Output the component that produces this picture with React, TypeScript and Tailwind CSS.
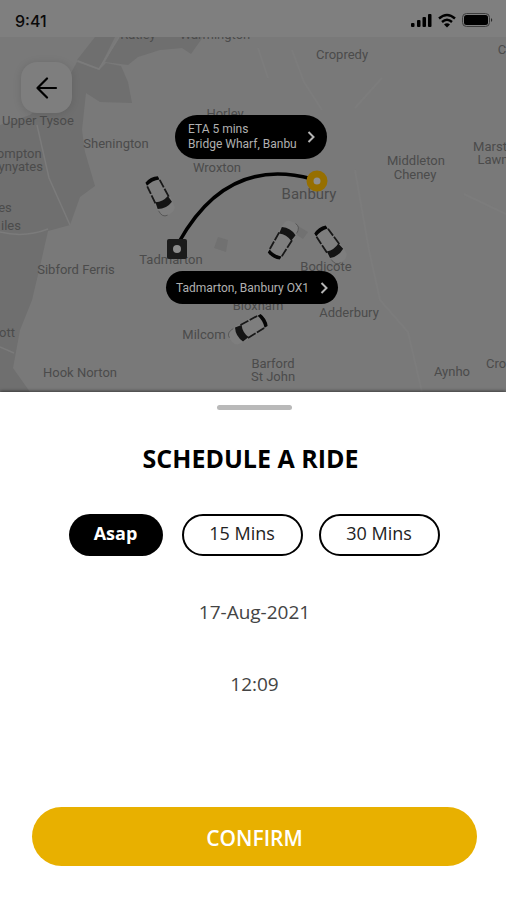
import { useState } from 'react'

const labels = [
  { x: 342, y: 59, text: 'Cropredy' },
  { x: 215, y: 39, text: 'Warmington' },
  { x: 138, y: 39, text: 'Ratley' },
  { x: 502, y: 54, text: 'C' },
  { x: 38, y: 125, text: 'Upper Tysoe' },
  { x: 116, y: 148, text: 'Shenington' },
  { x: 225, y: 118, text: 'Horley' },
  { x: 217, y: 172, text: 'Wroxton' },
  { x: 15, y: 158, text: 'Compton' },
  { x: 15, y: 171, text: 'Wynyates' },
  { x: 5, y: 212, text: 'es' },
  { x: 11, y: 230, text: 'iles' },
  { x: 416, y: 165, text: 'Middleton' },
  { x: 415, y: 179, text: 'Cheney' },
  { x: 490, y: 151, text: 'Marst' },
  { x: 493, y: 164, text: 'Lawn' },
  { x: 171, y: 264, text: 'Tadmarton' },
  { x: 76, y: 274, text: 'Sibford Ferris' },
  { x: 326, y: 271, text: 'Bodicote' },
  { x: 258, y: 310, text: 'Bloxham' },
  { x: 349, y: 317, text: 'Adderbury' },
  { x: 204, y: 339, text: 'Milcom' },
  { x: 7, y: 337, text: 'ott' },
  { x: 80, y: 377, text: 'Hook Norton' },
  { x: 273, y: 368, text: 'Barford' },
  { x: 273, y: 381, text: 'St John' },
  { x: 452, y: 376, text: 'Aynho' },
  { x: 496, y: 368, text: 'Cro' },
]

const cars = [
  { x: 158, y: 192, angle: 153 },
  { x: 281, y: 244, angle: 31 },
  { x: 328, y: 241, angle: 145 },
  { x: 252, y: 327, angle: 240 },
]

const slots = ['Asap', '15 Mins', '30 Mins']

// Drawn pointing up around its own centre, then turned to its heading.
function Car({ x, y, angle }: { x: number; y: number; angle: number }) {
  return (
    <g transform={`translate(${x} ${y}) rotate(${angle})`}>
      <path d="M-9 -13 L-8 -21 Q-6 -25 0 -25 Q6 -25 8 -21 L9 -13 L8 13 Q7 16 0 16 Q-7 16 -8 13Z" fill="#7e7e7e" />
      <path d="M2 -25 Q8 -25 8 -17" fill="none" stroke="#525252" strokeWidth="0.8" />
      <path d="M-8 -15 Q0 -19 8 -15 L7 -8 Q0 -11 -7 -8Z" fill="#141414" />
      <path d="M-7 10.5 Q0 13 7 10.5 L7 14 Q0 17 -7 14Z" fill="#050505" />
      <path d="M-7.5 -9 L-7 10 M7.5 -9 L7 10" stroke="#181818" strokeWidth="1.8" strokeDasharray="9 1.5" />
    </g>
  )
}

function MapCanvas() {
  return (
    <svg viewBox="0 37 506 355" preserveAspectRatio="xMidYMid slice" className="block h-full w-full" aria-hidden="true">
      <rect x="0" y="37" width="506" height="355" fill="#797979" />
      <g fill="#6f6f6f">
        <path d="M95 37 L115 37 L99 69 L77 60Z" />
        <path d="M119 37 L203 37 L191 54 L182 48 L160 50 L138 57 L128 65 L105 62Z" />
        <path d="M77 62 L99 70 L106 63 L121 66 L128 82 L132 103 L100 102 L86 93 L82 130 L85 152 L95 186 L80 197 L70 225 L48 231 L41 262 L32 300 L20 330 L13 368 L30 392 L0 392 L0 125 L30 115 L66 82Z" />
      </g>
      <g fill="none" stroke="#7b7b7b" strokeWidth="1.5">
        <path d="M119 37 L99 69 L78 61" />
        <path d="M37 125 L49 178 L70 225" />
        <path d="M0 232 Q25 238 48 229" />
        <path d="M0 347 L14 353" />
      </g>
      <g fill="none" stroke="#7c7c7c" strokeWidth="2">
        <path d="M258 48 L268 78 M292 50 L304 82 L322 110" />
        <path d="M355 108 L382 78" />
        <path d="M355 170 L369 250 L380 300 L408 332 L422 392" />
        <path d="M464 194 L506 214" />
      </g>
      <path d="M218 237 L228 240 L226 252 L214 248Z" fill="#717171" />
      <path d="M298 226 L308 232 L303 239 L297 235Z" fill="#717171" />
      <g fill="#4b4b4b" fontFamily="Roboto, sans-serif" fontSize="13" textAnchor="middle">
        {labels.map((l) => (
          <text key={l.text} x={l.x} y={l.y}>{l.text}</text>
        ))}
        <text x="309" y="199" fontSize="15">Banbury</text>
      </g>
      {cars.map((c) => (
        <Car key={c.x} {...c} />
      ))}
      <path d="M179 242 C208 190 250 162 312 179" fill="none" stroke="#000" strokeWidth="3.5" />
      <circle cx="317" cy="181" r="7" fill="#8f8f8f" stroke="#966f00" strokeWidth="7" />
      <rect x="167" y="239" width="20" height="20" rx="2" fill="#1b1b1b" />
      <circle cx="177" cy="249" r="4" fill="#8b8b8b" />
    </svg>
  )
}

function StatusBar() {
  return (
    <div className="flex h-[37px] items-center justify-between bg-[#7f7f7f] pt-1 pr-3 pl-[15px]">
      <span className="font-['Inter',sans-serif] text-base font-medium text-[#0a0a0a]">9:41</span>
      <svg width="84" height="18" viewBox="0 0 84 18" fill="#000" aria-hidden="true">
        <rect x="1" y="11" width="3.5" height="4" rx="1" />
        <rect x="7" y="8" width="3.5" height="7" rx="1" />
        <rect x="12.5" y="5" width="3.5" height="10" rx="1" />
        <rect x="18" y="2" width="3.5" height="13" rx="1" />
        <g fill="none" stroke="#000" strokeWidth="2.4">
          <path d="M29 6.5 Q37 -0.5 45 6.5" />
          <path d="M32 10 Q37 5.5 42 10" />
        </g>
        <path d="M34 12.5 Q37 10 40 12.5 L37 15.5Z" />
        <rect x="52.5" y="1.5" width="27" height="13" rx="4" fill="none" stroke="#3d3d3d" />
        <rect x="54" y="3" width="24" height="10" rx="2.5" />
        <path d="M81 6 Q83.5 8 81 10Z" fill="#2a2a2a" />
      </svg>
    </div>
  )
}

function Chevron() {
  return (
    <svg width="8" height="12" viewBox="0 0 8 12" fill="none" stroke="#b5b5b5" strokeWidth="2" className="shrink-0" aria-hidden="true">
      <path d="M1.5 1 L6.5 6 L1.5 11" />
    </svg>
  )
}

export default function App() {
  const [slot, setSlot] = useState('Asap')

  return (
    <main className="flex min-h-screen flex-col bg-white font-['Open_Sans',sans-serif] text-black">
      <StatusBar />
      <section className="relative h-[355px] overflow-hidden">
        <MapCanvas />
        <button
          type="button"
          aria-label="Back"
          className="absolute top-[25px] left-[21px] flex size-[51px] items-center justify-center rounded-2xl bg-[#7e7e7e] shadow-[0_1px_8px_rgba(0,0,0,0.12)]"
        >
          <svg width="22" height="22" viewBox="0 0 22 22" fill="none" stroke="#000" strokeWidth="2.2" strokeLinecap="round" strokeLinejoin="round" aria-hidden="true">
            <path d="M20 11 H1.5 M11 1.5 L1.5 11 L11 20.5" />
          </svg>
        </button>
        <button
          type="button"
          className="absolute top-[78px] left-[175px] flex h-11 w-[152px] items-center justify-between rounded-full bg-black pr-3 pl-[13px] text-left font-['Roboto',sans-serif] text-xs leading-[15px] text-[#b0b0b0]"
        >
          <span className="whitespace-nowrap">
            ETA 5 mins
            <br />
            Bridge Wharf, Banbu
          </span>
          <Chevron />
        </button>
        <button
          type="button"
          className="absolute top-[234px] left-[166px] flex h-[33px] w-[172px] items-center justify-between rounded-full bg-black px-[10px] font-['Roboto',sans-serif] text-xs text-[#b0b0b0]"
        >
          <span className="whitespace-nowrap">Tadmarton, Banbury OX1</span>
          <Chevron />
        </button>
      </section>

      <section className="relative flex flex-1 flex-col items-center bg-white pt-[13px] pr-[29px] pb-[34px] pl-8 shadow-[0_-1px_3px_rgba(0,0,0,0.5)]">
        <div className="h-[5px] w-[75px] rounded-full bg-[#b9b9b9]" />
        <h1 className="mt-8 pr-2 text-[25px] leading-8 font-bold">SCHEDULE A RIDE</h1>
        <div className="mt-10 flex pr-px">
          {slots.map((s) => (
            <button
              key={s}
              type="button"
              aria-pressed={slot === s}
              onClick={() => setSlot(s)}
              className={
                slot === s
                  ? 'mr-[19px] h-[42px] w-[94px] rounded-full bg-black pb-1 text-lg font-bold text-white'
                  : 'mr-4 h-[42px] w-[121px] rounded-full border-2 border-black pb-1 text-lg text-[#222] last:mr-0'
              }
            >
              {s}
            </button>
          ))}
        </div>
        <p className="mt-10 text-[19px] leading-8 text-[#444]">17-Aug-2021</p>
        <p className="mt-10 text-[19px] leading-8 text-[#444]">12:09</p>
        <button type="button" className="mt-auto h-[59px] w-full rounded-full bg-[#e8b000] pt-1 text-[21px] font-semibold text-white">
          CONFIRM
        </button>
      </section>
    </main>
  )
}
